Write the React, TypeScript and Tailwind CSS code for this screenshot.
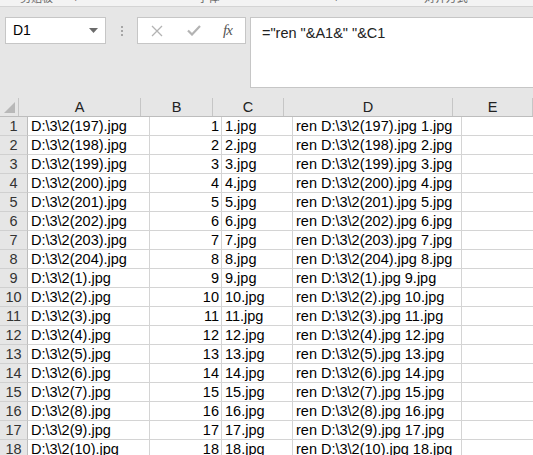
import React from 'react';

const cols = [
  { id: 'A', w: 'w-[122px]' },
  { id: 'B', w: 'w-[72px]' },
  { id: 'C', w: 'w-[71px]' },
  { id: 'D', w: 'w-[169px]' },
  { id: 'E', w: 'w-[80px]' },
];

const names = [197, 198, 199, 200, 201, 202, 203, 204, 1, 2, 3, 4, 5, 6, 7, 8, 9, 10];

const rows = names.map((n, i) => {
  const a = `D:\\3\\2(${n}).jpg`;
  const c = `${i + 1}.jpg`;
  return { num: i + 1, a, b: String(i + 1), c, d: `ren ${a} ${c}` };
});

export default function App() {
  return (
    <div className="w-[533px] h-[455px] overflow-hidden bg-[#e6e6e6] text-black font-['Liberation_Sans',Arial,sans-serif]">
      {/* ribbon edge, mostly scrolled off */}
      <div className="h-[7px] overflow-hidden bg-[#f3f3f3] border-b border-[#d4d4d4] text-[11px] text-[#666] leading-none">
        <div className="flex -mt-[8px] font-['Noto_Sans_CJK_SC',sans-serif]">
          <span className="ml-[20px]">剪贴板</span>
          <span className="ml-[22px]">⌐</span>
          <span className="ml-[116px]">字体</span>
          <span className="ml-[116px]">⌐</span>
          <span className="ml-[82px]">对齐方式</span>
        </div>
      </div>

      {/* formula bar */}
      <div className="flex items-start pt-[10px] pl-[5px] h-[91px]">
        <div className="w-[101px] h-[27px] bg-white border border-[#c6c6c6] flex items-center justify-between pl-[7px] pr-[7px]">
          <span className="text-[14px]">D1</span>
          <svg width="9" height="5" viewBox="0 0 9 5"><path d="M0 0h9L4.5 5z" fill="#6b6b6b" /></svg>
        </div>
        <div className="w-[31px] h-[27px] flex flex-col items-center justify-center gap-[2px]">
          <span className="w-[2px] h-[2px] bg-[#a6a6a6]" />
          <span className="w-[2px] h-[2px] bg-[#a6a6a6]" />
          <span className="w-[2px] h-[2px] bg-[#a6a6a6]" />
        </div>
        <div className="w-[109px] h-[27px] bg-white border border-[#c6c6c6] flex items-center">
          <svg className="ml-[13px]" width="12" height="12" viewBox="0 0 12 12">
            <path d="M1 1l10 10M11 1L1 11" stroke="#b3b3b3" strokeWidth="1.3" fill="none" />
          </svg>
          <svg className="ml-[24px]" width="14" height="11" viewBox="0 0 14 11">
            <path d="M1 5.5l4 4L13 1" stroke="#b3b3b3" strokeWidth="2.2" fill="none" />
          </svg>
          <span className="ml-[22px] italic text-[15px] text-[#555] font-['Liberation_Serif',serif] tracking-[-1px]">fx</span>
        </div>
        <div className="ml-[4px] flex-1 h-[71px] bg-white border-l border-t border-b border-[#c6c6c6] pl-[11px] pt-[5px] text-[14.5px] text-[#222]">
          ="ren "&amp;A1&amp;" "&amp;C1
        </div>
      </div>

      {/* sheet */}
      <div className="flex h-[19px] border-b border-[#bdbdbd] text-[14.5px] text-[#222]">
        <div className="w-[28px] h-full border-r border-[#c6c6c6] relative">
          <svg className="absolute right-[3px] bottom-[3px]" width="11" height="11" viewBox="0 0 11 11">
            <path d="M11 0v11H0z" fill="#b8b8b8" />
          </svg>
        </div>
        {cols.map((c) => (
          <div key={c.id} className={`${c.w} shrink-0 h-full border-r border-[#c6c6c6] flex items-center justify-center leading-none`}>
            {c.id}
          </div>
        ))}
      </div>
      {rows.map((r) => (
        <div key={r.num} className="flex h-[19px] text-[14.5px] leading-none">
          <div className="w-[28px] shrink-0 h-full bg-[#e6e6e6] border-r border-[#bdbdbd] border-b border-b-[#d0d0d0] flex items-center justify-center text-[#333]">
            {r.num}
          </div>
          <div className="w-[122px] shrink-0 h-full bg-white border-r border-b border-[#d4d4d4] flex items-center pl-[3px] whitespace-nowrap overflow-visible">
            {r.a}
          </div>
          <div className="w-[72px] shrink-0 h-full bg-white border-r border-b border-[#d4d4d4] flex items-center justify-end pr-[2px]">
            {r.b}
          </div>
          <div className="w-[71px] shrink-0 h-full bg-white border-r border-b border-[#d4d4d4] flex items-center pl-[3px]">
            {r.c}
          </div>
          <div className="w-[169px] shrink-0 h-full bg-white border-r border-b border-[#d4d4d4] flex items-center pl-[3px] whitespace-nowrap">
            {r.d}
          </div>
          <div className="w-[80px] shrink-0 h-full bg-white border-r border-b border-[#d4d4d4]" />
        </div>
      ))}
    </div>
  );
}
